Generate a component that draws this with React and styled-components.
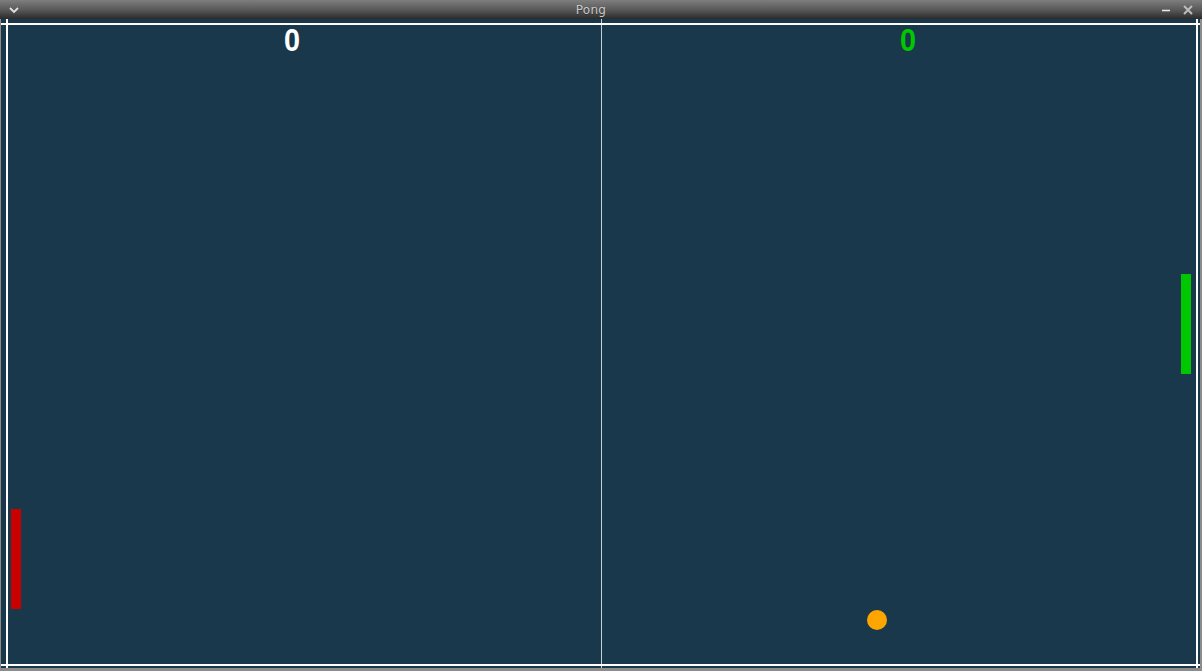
import React from "react";
import styled, { createGlobalStyle } from "styled-components";

const GlobalStyle = createGlobalStyle`
  html, body {
    margin: 0;
    padding: 0;
    background: #8a8a8a;
    overflow: hidden;
  }
`;

const Window = styled.div`
  width: 1202px;
  height: 671px;
  display: flex;
  flex-direction: column;
  background: #8c8c8c;
  font-family: "DejaVu Sans", "Liberation Sans", sans-serif;
`;

const TitleBar = styled.div`
  height: 19px;
  flex: none;
  display: flex;
  align-items: center;
  background: linear-gradient(#7e7e7e, #565656 55%, #2a2a2a);
`;

const TitleSide = styled.div`
  width: ${(p) => p.width}px;
  height: 100%;
  display: flex;
  align-items: center;
  justify-content: ${(p) => (p.right ? "flex-end" : "flex-start")};
  gap: 10px;
  padding: 0 8px;
  box-sizing: border-box;
`;

const Title = styled.div`
  flex: 1;
  text-align: center;
  font-size: 12px;
  color: #c9c9c9;
  text-shadow: 0 1px 0 #333;
  letter-spacing: 0.3px;
`;

const Body = styled.div`
  flex: 1;
  display: flex;
  padding: 0 2px 3px 1px;
`;

const Field = styled.div`
  position: relative;
  flex: 1;
  background: #1a384b;
  overflow: hidden;
`;

const HLine = styled.div`
  position: absolute;
  left: 0;
  right: 0;
  top: ${(p) => p.top}px;
  height: 2px;
  background: #ffffff;
`;

const VLine = styled.div`
  position: absolute;
  top: 0;
  bottom: 0;
  left: ${(p) => p.left}px;
  width: ${(p) => p.width || 2}px;
  background: ${(p) => p.color || "#ffffff"};
`;

const Paddle = styled.div`
  position: absolute;
  left: ${(p) => p.x}px;
  top: ${(p) => p.y}px;
  width: 10px;
  height: 100px;
  background: ${(p) => p.color};
`;

const Ball = styled.div`
  position: absolute;
  left: ${(p) => p.x}px;
  top: ${(p) => p.y}px;
  width: 20px;
  height: 20px;
  border-radius: 50%;
  background: #ffa500;
`;

const Score = styled.div`
  position: absolute;
  top: 5px;
  left: ${(p) => p.x}px;
  transform: translateX(-50%) scaleX(0.9);
  font-family: "Liberation Sans", Arial, sans-serif;
  font-weight: bold;
  font-size: 32px;
  line-height: 1;
  color: ${(p) => p.color};
`;

const players = [
  { score: 0, scoreX: 291, color: "#ffffff", paddleX: 10, paddleY: 490, paddleColor: "#c80000" },
  { score: 0, scoreX: 907, color: "#00c800", paddleX: 1180, paddleY: 255, paddleColor: "#00c800" },
];

function App() {
  return (
    <>
      <GlobalStyle />
      <Window>
        <TitleBar>
          <TitleSide width={80}>
            <svg width="12" height="8" viewBox="0 0 12 8">
              <polyline points="2,2 6,6 10,2" fill="none" stroke="#e0e0e0" strokeWidth="1.8" />
            </svg>
          </TitleSide>
          <Title>Pong</Title>
          <TitleSide width={100} right>
            <svg width="12" height="12" viewBox="0 0 12 12">
              <line x1="2" y1="6.5" x2="10" y2="6.5" stroke="#e6e6e6" strokeWidth="1.6" />
            </svg>
            <svg width="12" height="12" viewBox="0 0 12 12">
              <path d="M2 2 L10 10 M10 2 L2 10" stroke="#bdbdbd" strokeWidth="2" />
            </svg>
          </TitleSide>
        </TitleBar>
        <Body>
          <Field>
            <VLine left={600} width={1} color="#c5ced6" />
            <HLine top={4} />
            <HLine top={645} />
            <VLine left={5} />
            <VLine left={1195} />
            {players.map((p, i) => (
              <React.Fragment key={i}>
                <Score x={p.scoreX} color={p.color}>{p.score}</Score>
                <Paddle x={p.paddleX} y={p.paddleY} color={p.paddleColor} />
              </React.Fragment>
            ))}
            <Ball x={866} y={591} />
          </Field>
        </Body>
      </Window>
    </>
  );
}

export default App;
